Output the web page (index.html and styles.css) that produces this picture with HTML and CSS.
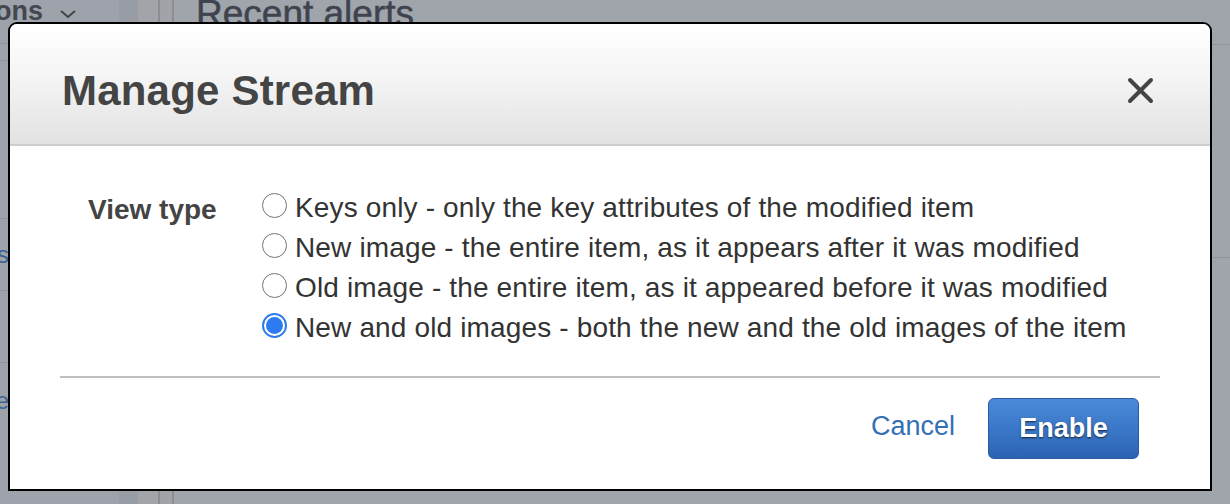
FILE: index.html
```html
<!DOCTYPE html>
<html lang="en">
<head>
<meta charset="utf-8">
<title>Manage Stream</title>
<link rel="stylesheet" href="styles.css">
</head>
<body>
<div class="page">
  <aside class="nav">
    <div class="nav-head"><span class="nav-title">Actions</span>
      <svg class="chev" width="18" height="10" viewBox="0 0 18 10"><path d="M2 2 L9 8 L16 2" fill="none" stroke="#444" stroke-width="2"/></svg>
    </div>
    <div class="nav-row nav-row-short"></div>
    <div class="nav-row nav-row-tall"></div>
    <div class="nav-row nav-row-mid"><span class="nav-link">Items</span></div>
    <div class="nav-row nav-row-mid"></div>
    <div class="nav-row nav-row-end"><span class="nav-link">More</span></div>
  </aside>
  <div class="rail"></div>
  <div class="rail-gap"></div>
  <div class="splitter"></div>
  <main class="main">
    <h1 class="main-title">Recent alerts</h1>
    <div class="main-panel"></div>
    <div class="main-panel"></div>
  </main>
</div>

<div class="modal" role="dialog" aria-labelledby="modal-title">
  <div class="modal-header">
    <h2 class="modal-title" id="modal-title">Manage Stream</h2>
    <svg class="modal-close" width="27" height="27" viewBox="0 0 27 27" aria-label="Close">
      <path d="M3 3 L24 24 M24 3 L3 24" stroke="#444" stroke-width="4" stroke-linecap="round" fill="none"/>
    </svg>
  </div>
  <div class="modal-body">
    <div class="field">
      <div class="field-label">View type</div>
      <div class="options">
        <label class="option"><span class="radio"></span>Keys only - only the key attributes of the modified item</label>
        <label class="option"><span class="radio"></span>New image - the entire item, as it appears after it was modified</label>
        <label class="option"><span class="radio"></span>Old image - the entire item, as it appeared before it was modified</label>
        <label class="option"><span class="radio radio-checked"></span>New and old images - both the new and the old images of the item</label>
      </div>
    </div>
    <div class="divider"></div>
    <div class="footer">
      <span class="btn-link">Cancel</span>
      <span class="btn-primary">Enable</span>
    </div>
  </div>
</div>
</body>
</html>
```

FILE: styles.css
```css
html, body {
  margin: 0;
  padding: 0;
}
body {
  width: 1230px;
  height: 504px;
  overflow: hidden;
  background: #a0a4ab;
  font-family: "Liberation Sans", Arial, Helvetica, sans-serif;
}
.page {
  display: flex;
  height: 504px;
}
.nav {
  width: 119px;
  background: #9ea2ab;
  display: flex;
  flex-direction: column;
}
.nav-head {
  height: 43px;
  display: flex;
  align-items: flex-start;
  gap: 16px;
  margin-left: -56px;
  border-bottom: 1px solid #8f939b;
}
.nav-title {
  font-weight: bold;
  font-size: 27px;
  color: #44474d;
  line-height: 1;
  margin-top: -2px;
}
.chev {
  margin-top: 9px;
}
.nav-row {
  border-bottom: 1px solid #8f939b;
  display: flex;
  justify-content: flex-end;
  align-items: center;
  width: 9px;
}
.nav-row-short { height: 16px; }
.nav-row-tall { height: 157px; }
.nav-row-mid { height: 71px; }
.nav-row-end { height: 140px; border-bottom: none; align-items: flex-start; }
.nav-row-end .nav-link { margin-top: 24px; }
.nav-link {
  font-size: 24px;
  color: #3d6391;
  white-space: nowrap;
}
.rail {
  width: 19px;
  background: #989ca4;
}
.rail-gap {
  width: 20px;
  background: #a2a4a9;
}
.splitter {
  width: 12px;
  background: #a1a3a9;
  border-left: 2px solid #8a8d93;
  border-right: 2px solid #8a8d93;
}
.main {
  flex: 1;
  padding-left: 22px;
}
.main-title {
  margin: -8px 0 0 0;
  font-size: 37px;
  font-weight: normal;
  color: #3e434e;
  line-height: 1.2;
  -webkit-text-stroke: 0.5px #3e434e;
}
.main-panel {
  height: 204px;
  border-top: 1px solid #8f939c;
  margin-top: 8px;
}

/* Modal overlay */
.modal {
  position: absolute;
  left: 8px;
  top: 22px;
  width: 1204px;
  height: 469px;
  box-sizing: border-box;
  border: 2px solid #000;
  border-radius: 9px 9px 0 0;
  background: #fff;
  overflow: hidden;
}
.modal-header {
  height: 120px;
  border-bottom: 2px solid #cccccc;
  background: linear-gradient(#ffffff 0%, #f6f6f6 40%, #e2e2e2 100%);
  display: flex;
  justify-content: space-between;
  align-items: flex-start;
  padding: 0 56px 0 52px;
}
.modal-title {
  margin: 46px 0 0 0;
  font-size: 42px;
  line-height: 1;
  font-weight: bold;
  color: #444;
  letter-spacing: 0.2px;
}
.modal-close {
  margin-top: 53px;
}
.modal-body {
  padding: 41px 50px 0 50px;
}
.field {
  display: grid;
  grid-template-columns: 202px 1fr;
}
.field-label {
  padding-left: 28px;
  font-size: 28px;
  font-weight: bold;
  color: #444;
  line-height: 40px;
  margin-top: 3px;
}
.options {
  display: flex;
  flex-direction: column;
}
.option {
  display: flex;
  align-items: flex-start;
  font-size: 28px;
  line-height: 40px;
  color: #333;
  white-space: nowrap;
  letter-spacing: 0.15px;
  padding-top: 1px;
  margin-bottom: -1px;
}
.radio {
  width: 25px;
  height: 25px;
  box-sizing: border-box;
  border: 1.5px solid #737373;
  border-radius: 50%;
  margin: 5px 8px 0 0;
  background: #fff;
  flex: none;
  position: relative;
}
.radio-checked {
  border: 2px solid #2c7bf0;
}
.radio-checked::after {
  content: "";
  position: absolute;
  inset: 2px;
  border-radius: 50%;
  background: #2c7bf0;
}
.divider {
  height: 2px;
  background: #bfbfbf;
  margin-top: 29px;
}
.footer {
  display: flex;
  justify-content: flex-end;
  align-items: center;
  gap: 33px;
  padding: 20px 21px 0 0;
}
.btn-link {
  font-size: 27px;
  color: #3370b6;
  padding-bottom: 4px;
}
.btn-primary {
  width: 151px;
  height: 61px;
  box-sizing: border-box;
  border: 1px solid #2a5ca6;
  border-radius: 6px;
  background: linear-gradient(#4a8ad9 0%, #3b77c8 50%, #2c63b2 100%);
  color: #fff;
  font-size: 27px;
  font-weight: bold;
  display: flex;
  align-items: center;
  justify-content: center;
  text-shadow: 0 1px 2px rgba(0, 0, 0, 0.7);
}
```
